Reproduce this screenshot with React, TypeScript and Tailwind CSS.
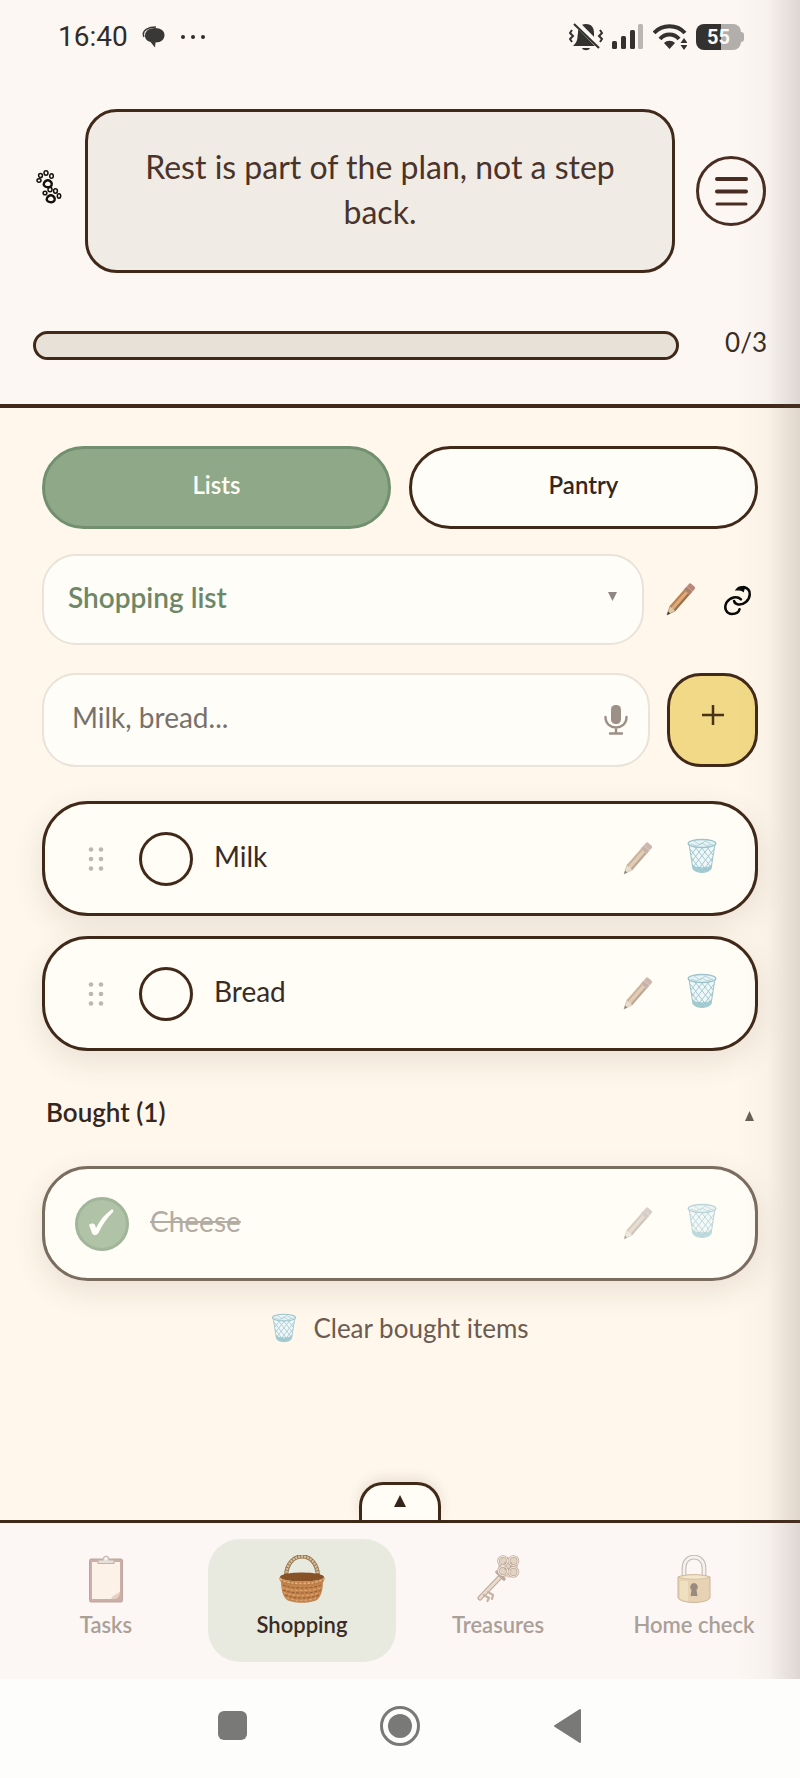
import React, { useState } from 'react';

type Item = { id: number; name: string; done: boolean };

const PawIcon = () => (
  <svg viewBox="0 0 26 34" className="w-[26px] h-[34px] mb-2 shrink-0" fill="none" stroke="#14100e" strokeWidth="1.5" aria-hidden="true">
    <path d="M8 13c1-2.500 4-3.500 6-2s2.500 4 .5 5.500-5 .5-6-.5-1-2-.5-3Z" strokeWidth="2.400" />
    <ellipse cx="3" cy="10.500" rx="2" ry="1.700" />
    <ellipse cx="4.500" cy="5.500" rx="1.900" ry="2.100" />
    <ellipse cx="10" cy="3" rx="2" ry="2.200" />
    <ellipse cx="15.500" cy="6" rx="1.800" ry="2.300" />
    <path d="M12 29c1-2.500 4-3.500 6-2s2.500 4 .5 5.500-5 .5-6-.5-1-2-.5-3Z" strokeWidth="2.400" transform="translate(-1 -1)" />
    <ellipse cx="9" cy="23" rx="1.900" ry="1.800" />
    <ellipse cx="14" cy="19.500" rx="2" ry="2.300" />
    <ellipse cx="19.500" cy="21" rx="1.900" ry="2.200" />
    <ellipse cx="23" cy="26" rx="1.700" ry="2.200" />
  </svg>
);

const PencilIcon = ({ className = '' }: { className?: string }) => (
  <svg viewBox="0 0 29 33" className={`w-[29px] h-[33px] ${className}`} aria-hidden="true">
    <g transform="translate(1 32) rotate(41)">
      <path d="M0 0L-3.800-9H3.800Z" fill="#e3c9a0" stroke="#8d7257" strokeWidth=".5" />
      <path d="M0 0L-1.400-3.300H1.400Z" fill="#3b3531" />
      <path d="M-3.800-8.500h2.600v-22h-2.600z" fill="#bd8350" />
      <path d="M-1.200-9.200h2.600v-21.300h-2.600z" fill="#dca878" />
      <path d="M1.400-8.500h2.400v-22h-2.400z" fill="#a06c45" />
      <path d="M-3.900-34.500h7.800v4.500h-7.800z" fill="#b98a77" />
      <path d="M-3.900-33h7.800M-3.900-31.500h7.800" stroke="#8b6a5c" strokeWidth=".6" />
      <path d="M-3.900-34.500v-3q0-2 2-2h3.800q2 0 2 2v3z" fill="#b98678" />
    </g>
  </svg>
);

const LinkIcon = () => (
  <svg viewBox="2 0 84 94" className="w-[29px] h-8" fill="none" stroke="#080808" strokeWidth="7.500" strokeLinecap="round" aria-hidden="true">
    <path d="M62 9c12 3 19 11 18 22-1 18-18 31-34 29-6-1-11-5-12-10" />
    <path d="M54 45C42 33 22 40 12 54 3 70 11 88 28 88c11 0 20-6 22-14" />
    <path d="M40 17c6-8 16-11 25-8l-4 12c-5-5-12-4-21-4z" fill="#080808" strokeWidth="4" />
  </svg>
);

const TrashIcon = ({ className = '' }: { className?: string }) => (
  <svg viewBox="0 0 30 36" className={className} fill="none" stroke="#9fc3cb" aria-hidden="true">
    <path d="M2 6l4 25c3 4.500 15 4.500 18 0l4-25z" fill="#eff8f8" strokeWidth="1" />
    <path d="M5 27c5 3 15 3 20 0l-1 4c-3 4.500-15 4.500-18 0z" fill="#a3ced4" stroke="none" />
    <path
      d="M3 11l17 22M8 9l16 20M14 9l11 14M20 9l6 8M4 19l11 15M5 26l5 7M27 11L10 33M22 9L6 29M16 9L5 23M10 9l-6 8M26 19L15 34M25 26l-5 7"
      strokeWidth=".9"
    />
    <ellipse cx="15" cy="5.500" rx="13.800" ry="4" fill="#e6f4f5" strokeWidth="1.400" />
    <path d="M4 6l6 2 5-3 5 3 6-2M7 3l6 4 5-4 6 3" strokeWidth=".7" />
  </svg>
);

const MicIcon = () => (
  <svg viewBox="0 0 24 30" className="block w-6 h-[30px]" aria-hidden="true">
    <rect x="7" y="0" width="10" height="19" rx="4.500" fill="#9d9087" />
    <path d="M1.500 12c0 14 21 14 21 0M12 22.500V28M6 28.500h12" fill="none" stroke="#9d9087" strokeWidth="2.400" strokeLinecap="round" />
  </svg>
);

const ClipboardIcon = () => (
  <svg viewBox="0 0 36 48" className="h-12" aria-hidden="true">
    <rect x="1.500" y="4" width="33" height="43" rx="1.500" fill="#a67568" stroke="#8a6357" />
    <path d="M4 7h28v30l-8 7H4z" fill="#fdeedd" />
    <path d="M32 36c-2 4-6 2-9 8h4c3-.5 5-3 5-8z" fill="#d8b19d" />
    <path d="M10 8.500V5h5C15 0 21 0 21 5h5v3.500z" fill="#d5cdc6" stroke="#8f817a" strokeWidth="1.100" />
    <circle cx="18" cy="3.800" r="1.300" fill="#fff" />
  </svg>
);

const BasketIcon = () => (
  <svg viewBox="0 0 48 48" className="h-12" fill="none" aria-hidden="true">
    <path d="M8 21C9-5 39-5 40 21" stroke="#94764f" strokeWidth="4.200" />
    <path d="M8 21C9-5 39-5 40 21" stroke="#d9c09b" strokeWidth="2.400" strokeDasharray="2 1" />
    <ellipse cx="24" cy="22" rx="22" ry="4.500" fill="#875226" />
    <path d="M3 26c0 9 2 15 5 18 5 5 27 5 32 0 3-3 5-9 5-18-9 5-33 5-42 0z" fill="#c4844e" />
    <path d="M1 22c3 6 43 6 46 0l-1 4c-5 6-39 6-44 0z" fill="#bd7d47" />
    <path d="M2 24c8 6 36 6 44 0" stroke="#e3b37c" strokeWidth="1.600" strokeDasharray="2.500 1.500" />
    <path d="M5 30c8 4 30 4 38 0M5 35c8 4 30 4 38 0M7 40c8 4 26 4 34 0" stroke="#9a6135" strokeWidth="1.200" strokeDasharray="3 1.500" />
    <path d="M4 32.500c8 4 32 4 40 0M6 37.500c8 4 28 4 36 0M9 42.500c8 4 22 4 30 0" stroke="#dda571" strokeWidth="1.200" strokeDasharray="2.500 2" />
  </svg>
);

const KeyIcon = () => (
  <svg viewBox="0 0 44 48" className="h-12" fill="none" strokeLinecap="round" aria-hidden="true">
    <path d="M27 19L4 43" stroke="#8c6a52" strokeWidth="5" />
    <path d="M27 19L4 43" stroke="#dac7b0" strokeWidth="2.800" />
    <path d="M8 40l5 3-1.500 3M12 37l5 3-1 4" stroke="#9b7b62" strokeWidth="2.200" />
    <path d="M21 17l7 7" stroke="#8c6a52" strokeWidth="3.500" />
    <path d="M23 3l9-1 10 1v9l-1 8-8 3-8-3-3-8z" fill="#cdb59b" />
    <g stroke="#8c6a52" strokeWidth="2.600">
      <circle cx="27" cy="6" r="4.500" />
      <circle cx="37.500" cy="6" r="4.500" />
      <circle cx="37.500" cy="17" r="4.500" />
      <circle cx="27" cy="16" r="4.500" />
      <circle cx="32" cy="11" r="3.500" />
    </g>
    <g stroke="#eadccb" strokeWidth="1.200">
      <circle cx="27" cy="6" r="4.500" />
      <circle cx="37.500" cy="6" r="4.500" />
      <circle cx="37.500" cy="17" r="4.500" />
      <circle cx="27" cy="16" r="4.500" />
    </g>
  </svg>
);

const LockIcon = () => (
  <svg viewBox="0 0 34 48" className="h-12" fill="none" aria-hidden="true">
    <path d="M7 23V13C7-1.500 27-1.500 27 13v10" stroke="#938c86" strokeWidth="4.800" />
    <path d="M7 23V13C7-1.500 27-1.500 27 13v10" stroke="#efedea" strokeWidth="2.600" />
    <path d="M1 22c8-3 24-3 32 0v21c-4 6-28 6-32 0z" fill="#d6b780" stroke="#a58152" />
    <path d="M1 22c8-3 24-3 32 0-8 3-24 3-32 0z" fill="#efd9a6" stroke="#a58152" strokeWidth=".7" />
    <path d="M3 26v17c2 2 5 3 8 3V26z" fill="#f0d9a6" opacity=".7" />
    <path d="M17 28a4 4 0 0 1 2.500 7l1 6h-7l1-6A4 4 0 0 1 17 28z" fill="#4d3320" />
  </svg>
);

const StatusBar = () => (
  <div className="flex items-center justify-between h-[73px] pl-[58px] pr-[56px] text-[#2f2d2b]">
    <div className="flex items-center">
      <span className="font-[Roboto,sans-serif] text-[28px] leading-8">16:40</span>
      <svg viewBox="0 0 24 22" className="w-6 h-[22px] ml-3.5" aria-hidden="true">
        <path d="M2 11C-1 4 7 1 14 1" fill="none" stroke="#3a3836" strokeWidth="1.500" />
        <path d="M13 2c6 0 9.500 3 9.500 7s-3 7.500-9 7.500l-.500 5-4.500-5.500C4.500 15 3 12.500 3 9.500 3 5 7 2 13 2z" fill="#3a3836" />
      </svg>
      <svg viewBox="0 0 24 4" className="w-6 h-1 ml-[15px]" fill="#2f2d2b" aria-hidden="true">
        <circle cx="2" cy="2" r="2" />
        <circle cx="12" cy="2" r="2" />
        <circle cx="22" cy="2" r="2" />
      </svg>
    </div>
    <div className="flex items-center gap-[9px]">
      <svg viewBox="0 0 34 28" className="w-[34px] h-7" aria-hidden="true">
        <path d="M17 1c6 0 8 4 8 9 0 6 0 8 5 13H4c5-5 4-7 5-13 0-5 2-9 8-9z" fill="#343230" />
        <path d="M13 25h8c-1 3-7 3-8 0z" fill="#343230" />
        <path d="M3 7l-2 3 3 3-3 3 2 3M31 7l2 3-3 3 3 3-2 3" fill="none" stroke="#343230" strokeWidth="2" />
        <path d="M6 -1l25 25" stroke="#fcf7f3" strokeWidth="6" />
        <path d="M5 1l25 24" stroke="#343230" strokeWidth="2.200" />
      </svg>
      <svg viewBox="0 0 32 26" className="w-8 h-[26px]" fill="#343230" aria-hidden="true">
        <rect x="0" y="17" width="5" height="8" rx="1.500" />
        <rect x="9" y="12" width="5" height="13" rx="1.500" />
        <rect x="18" y="6" width="5" height="19" rx="1.500" />
        <rect x="26" y="0" width="5" height="25" rx="1.500" fill="#bab6b3" />
      </svg>
      <svg viewBox="0 0 34 26" className="w-[34px] h-[26px]" fill="none" stroke="#343230" strokeWidth="4" aria-hidden="true">
        <path d="M1 9c8-9 23-9 31 0" />
        <path d="M7 15c5-6 14-6 19 0" />
        <path d="M11 19c3-3 8-3 11 0l-5.500 6z" fill="#343230" stroke="none" />
        <path d="M31 14l3.500 5h-7zM31 26l3.500-5h-7z" fill="#343230" stroke="none" />
      </svg>
      <div className="flex items-center">
        <div className="flex items-center justify-center w-[45px] h-[26px] rounded-lg bg-linear-to-r from-[#343230] from-55% to-[#b1aeab] to-55% font-[Roboto,sans-serif] text-xl leading-6 font-bold text-[#fcf9f6]">
          55
        </div>
        <div className="w-[3px] h-2.5 rounded-r bg-[#b1aeab]" />
      </div>
    </div>
  </div>
);

const Header = () => (
  <header className="bg-[#fcf7f3] border-b-4 border-[#41291a] pb-[42px]">
    <StatusBar />
    <div className="flex items-center pl-9 pr-[34px] pt-9">
      <PawIcon />
      <p className="flex-1 ml-[23px] mr-[21px] px-10 pt-8 pb-9 text-center text-[32px] leading-[45px] text-[#4a332b] bg-[#f0ebe5] border-3 border-[#41291a] rounded-4xl">
        Rest is part of the plan, not a step back.
      </p>
      <button aria-label="Menu" className="flex items-center justify-center size-[70px] rounded-full border-3 border-[#4a2d22]">
        <svg viewBox="0 0 33 29" className="w-[33px] h-[29px]" stroke="#4a2d22" strokeLinecap="round" aria-hidden="true">
          <path d="M2 2h29M2 14.500h29" strokeWidth="4" />
          <path d="M2 27h29" strokeWidth="3" />
        </svg>
      </button>
    </div>
    <div className="flex items-center px-[33px] mt-[55px]">
      <div
        role="progressbar"
        aria-label="Daily progress"
        aria-valuenow={0}
        aria-valuemax={3}
        className="flex-1 h-[29px] bg-[#e8e1d7] border-3 border-[#41291a] rounded-full"
      />
      <span className="w-[88px] pb-1.5 text-right text-[26px] leading-7 text-[#3a2b24]">0/3</span>
    </div>
  </header>
);

const ItemRow = ({ item, onToggle }: { item: Item; onToggle: () => void }) => (
  <li
    className={`flex items-center h-[115px] pr-[38px] bg-[#fffdf6] border-3 rounded-[46px] shadow-[0_10px_30px_rgba(80,60,40,0.12)] ${
      item.done ? 'pl-[30px] border-[#7a6d60]' : 'pl-[43px] border-[#41291a]'
    }`}
  >
    {!item.done && (
      <button aria-label={`Move ${item.name}`} className="mr-[34px]">
        <svg viewBox="0 0 17 24" className="w-[17px] h-6" fill="#bdb7b1" aria-hidden="true">
          <circle cx="3" cy="2.500" r="2.300" />
          <circle cx="13" cy="2.500" r="2.300" />
          <circle cx="3" cy="12" r="2.300" />
          <circle cx="13" cy="12" r="2.300" />
          <circle cx="3" cy="21.500" r="2.300" />
          <circle cx="13" cy="21.500" r="2.300" />
        </svg>
      </button>
    )}
    <label className="flex flex-1 items-center gap-[21px]">
      <span className="relative size-[54px]">
        <input
          type="checkbox"
          checked={item.done}
          onChange={onToggle}
          className="block appearance-none size-[54px] rounded-full border-3 border-[#41291a] checked:bg-[#b0c3a7] checked:border-[#a0b59a]"
        />
        {item.done && (
          <svg viewBox="0 0 54 54" className="absolute inset-0 pointer-events-none" aria-hidden="true">
            <path d="M14 28c2-2 5-2 6 0l1 3c4-8 9-14 15-18 2-1 3 0 2 2-6 6-11 13-14 20-2 4-6 4-7 1z" fill="#fffef8" />
          </svg>
        )}
      </span>
      <span className={`pb-1.5 text-[28px] leading-8 ${item.done ? 'line-through text-[#b3aca3]' : 'text-[#3a2b24]'}`}>
        {item.name}
      </span>
    </label>
    <button aria-label={`Edit ${item.name}`} className="mr-[35px]">
      <PencilIcon className={item.done ? 'opacity-40 grayscale-60' : 'opacity-60 grayscale-30'} />
    </button>
    <button aria-label={`Delete ${item.name}`} className="pb-1.5">
      <TrashIcon className={`w-[30px] h-9 ${item.done ? 'opacity-70' : ''}`} />
    </button>
  </li>
);

const navItems = [
  { label: 'Tasks', Icon: ClipboardIcon },
  { label: 'Shopping', Icon: BasketIcon },
  { label: 'Treasures', Icon: KeyIcon },
  { label: 'Home check', Icon: LockIcon },
];

const BottomNav = () => (
  <div>
    <div className="flex justify-center">
      <button
        aria-label="Expand panel"
        className="flex justify-center w-[82px] h-[38px] pt-2.5 bg-[#fffdf6] border-3 border-b-0 border-[#41291a] rounded-t-3xl shadow-[0_-4px_12px_rgba(90,60,40,0.12)]"
      >
        <svg viewBox="0 0 12 12" className="size-3" aria-hidden="true">
          <path d="M6 0l6 12H0z" fill="#35241b" />
        </svg>
      </button>
    </div>
    <nav className="grid grid-cols-4 gap-2 px-3 pt-4 pb-[17px] border-t-3 border-[#41291a] bg-[#fcf7f4]">
      {navItems.map(({ label, Icon }) => {
        const active = label === 'Shopping';
        return (
          <a
            key={label}
            href="#"
            aria-current={active ? 'page' : undefined}
            className={`flex flex-col items-center gap-1.5 h-[123px] pt-4 rounded-4xl text-[22px] leading-8 font-semibold whitespace-nowrap ${
              active ? 'bg-[#e8eadf] text-[#3a2b24]' : 'text-[#ab9f99]'
            }`}
          >
            <span className={active ? '' : 'opacity-55'}>
              <Icon />
            </span>
            {label}
          </a>
        );
      })}
    </nav>
  </div>
);

const SystemNav = () => (
  <div className="flex items-center justify-center gap-[133px] h-[99px] pb-1.5 bg-[#fdfdfb]">
    <button aria-label="Recent apps" className="size-[29px] rounded-md bg-[#797977]" />
    <button aria-label="Home" className="flex items-center justify-center size-10 rounded-full border-3 border-[#797977]">
      <span className="size-6 rounded-full bg-[#797977]" />
    </button>
    <button aria-label="Back">
      <svg viewBox="0 0 29 36" className="w-[29px] h-9" aria-hidden="true">
        <path d="M2 18L27 2v32z" fill="#797977" stroke="#797977" strokeWidth="2" strokeLinejoin="round" />
      </svg>
    </button>
  </div>
);

const App = () => {
  const [items, setItems] = useState<Item[]>([
    { id: 1, name: 'Milk', done: false },
    { id: 2, name: 'Bread', done: false },
    { id: 3, name: 'Cheese', done: true },
  ]);

  const toggle = (id: number) =>
    setItems((prev) => prev.map((item) => (item.id === id ? { ...item, done: !item.done } : item)));

  const open = items.filter((item) => !item.done);
  const bought = items.filter((item) => item.done);

  return (
    <div className="flex flex-col min-h-screen font-[Lato,sans-serif]">
      <div className="relative flex flex-col flex-1 bg-[#fff7ec]">
        <Header />

        <main className="flex-1 px-[42px] pt-[38px]">
          {/* Tabs */}
          <div className="grid grid-cols-2 gap-[18px] text-2xl leading-7 font-semibold">
            <button className="h-[83px] pb-1.5 rounded-full border-3 border-[#72906f] bg-[#8fa888] text-[#fffdf6]">Lists</button>
            <button className="h-[83px] pb-1.5 rounded-full border-3 border-[#41291a] bg-[#fffdf8] text-[#35261e]">Pantry</button>
          </div>

          {/* List picker */}
          <div className="flex items-center mt-[25px]">
            <div className="relative flex-1">
              <select
                aria-label="Shopping list"
                className="block appearance-none w-full h-[91px] pl-6 pr-12 pb-1.5 text-[28px] font-semibold text-[#6d8767] bg-[#fffdf7] border-2 border-[#e9e3da] rounded-[34px]"
              >
                <option>Shopping list</option>
              </select>
              <svg viewBox="0 0 9 9" className="absolute right-[27px] top-[38px] size-[9px] pointer-events-none" aria-hidden="true">
                <path d="M0 0h9L4.500 9z" fill="#8f877f" />
              </svg>
            </div>
            <button aria-label="Edit list" className="ml-[22px]">
              <PencilIcon />
            </button>
            <button aria-label="Share list" className="ml-7 mr-1.5">
              <LinkIcon />
            </button>
          </div>

          {/* New item */}
          <form className="flex mt-7 gap-[17px]" onSubmit={(e) => e.preventDefault()}>
            <div className="flex flex-1 items-center h-[94px] pl-7 pr-5 bg-[#fffdf7] border-2 border-[#e9e3da] rounded-[34px]">
              <input
                type="text"
                aria-label="New item"
                placeholder="Milk, bread..."
                className="flex-1 min-w-0 h-full pb-1.5 text-[28px] text-[#3a2b24] placeholder:text-[#77716c] bg-transparent outline-none"
              />
              <button type="button" aria-label="Voice input">
                <MicIcon />
              </button>
            </div>
            <button aria-label="Add item" className="flex items-center justify-center w-[91px] h-[94px] pb-2.5 bg-[#f1d987] border-3 border-[#41291a] rounded-[34px]">
              <svg viewBox="0 0 22 20" className="w-[22px] h-5" stroke="#4a3218" strokeWidth="2.500" aria-hidden="true">
                <path d="M0 10h22M11 0v20" />
              </svg>
            </button>
          </form>

          <ul className="flex flex-col gap-5 mt-[34px]">
            {open.map((item) => (
              <ItemRow key={item.id} item={item} onToggle={() => toggle(item.id)} />
            ))}
          </ul>

          {/* Bought */}
          <button className="flex items-center justify-between w-full px-1 mt-[45px] text-[26px] leading-8 font-semibold text-[#35261e]">
            Bought ({bought.length})
            <svg viewBox="0 0 9 10" className="w-[9px] h-2.5 mt-2" aria-hidden="true">
              <path d="M4.500 0L9 10H0z" fill="#6a5f57" />
            </svg>
          </button>
          <ul className="flex flex-col gap-5 mt-[38px]">
            {bought.map((item) => (
              <ItemRow key={item.id} item={item} onToggle={() => toggle(item.id)} />
            ))}
          </ul>
          <button className="flex items-center gap-4 mx-auto mt-[31px] text-[26px] leading-8 text-[#6b5b50]">
            <TrashIcon className="w-[26px] h-[30px]" />
            Clear bought items
          </button>
        </main>

        <BottomNav />

        {/* Edge shadow of the side drawer */}
        <div className="absolute inset-y-0 right-0 w-16 pointer-events-none bg-linear-to-r from-transparent via-[#5a484008] to-[#5a484030]" />
      </div>
      <SystemNav />
    </div>
  );
};

export default App;
